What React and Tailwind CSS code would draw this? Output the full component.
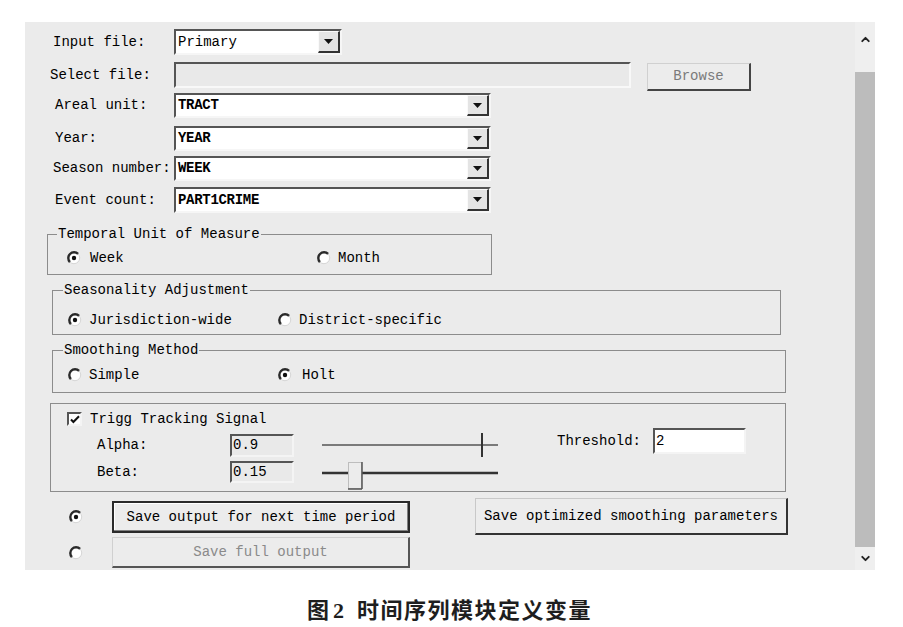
import { ChevronUp, ChevronDown } from "lucide-react";

function Radio({ checked }) {
  return (
    <svg width="14" height="14" viewBox="0 0 14 14" className="shrink-0">
      <circle cx="7" cy="7" r="5.8" fill="#fff" />
      <path d="M11.1 2.9A5.8 5.8 0 0 0 2.9 11.1" fill="none" stroke="#2a2a2a" strokeWidth="2.4" />
      <path d="M2.9 11.1A5.8 5.8 0 0 0 11.1 2.9" fill="none" stroke="#d6d6d6" strokeWidth="1" />
      {checked && <circle cx="7" cy="7" r="2.2" fill="#111" />}
    </svg>
  );
}

function Select({ value, w, h, bold }) {
  return (
    <div
      className={`flex ${w} ${h} border-2 border-t-[#555] border-l-[#555] border-r-[#f6f6f6] border-b-[#f6f6f6] bg-white`}
    >
      <span className={`flex flex-1 items-center pl-[2px] text-black ${bold ? "font-bold tracking-[-0.3px]" : ""}`}>
        {value}
      </span>
      <div className="flex w-[22px] items-center justify-center border border-t-[#fafafa] border-l-[#fafafa] border-r-2 border-b-2 border-r-[#333] border-b-[#333] bg-[#e4e4e4]">
        <svg width="9" height="5" viewBox="0 0 9 5">
          <path d="M0 0h9L4.5 5z" fill="#111" />
        </svg>
      </div>
    </div>
  );
}

function Row({ label, pad, children, className }) {
  return (
    <div className={`flex items-center ${className}`}>
      <span className={`w-[149px] ${pad}`}>{label}</span>
      {children}
    </div>
  );
}

export default function App() {
  return (
    <div className="flex h-[627px] w-[903px] flex-col bg-white font-['Liberation_Mono','DejaVu_Sans_Mono',monospace] text-[14px] text-black">
      <div className="ml-[25px] mt-[22px] flex h-[548px] w-[850px]">
        {/* form area */}
        <div className="flex h-full w-[830px] flex-col overflow-hidden bg-[#ebebeb]">
          <Row label="Input file:" pad="pl-[28px]" className="mt-[7px] h-[26px]">
            <Select value="Primary" w="w-[168px]" h="h-[26px]" />
          </Row>

          <div className="mt-[7px] flex h-[29px] items-start">
            <span className="w-[149px] pl-[25px] leading-[26px]">Select file:</span>
            <div className="h-[26px] w-[457px] border-2 border-t-[#555] border-l-[#555] border-r-[#f8f8f8] border-b-[#f8f8f8] bg-[#e9e9e9]" />
            <button className="ml-[16px] mt-[1px] h-[28px] w-[104px] border border-t-[#d0d0d0] border-l-[#d0d0d0] border-r-2 border-b-2 border-r-[#444] border-b-[#444] bg-[#ececec] text-[#7a7a7a]">
              Browse
            </button>
          </div>

          <Row label="Areal unit:" pad="pl-[30px]" className="mt-[2px] h-[25px]">
            <Select value="TRACT" w="w-[317px]" h="h-[25px]" bold />
          </Row>
          <Row label="Year:" pad="pl-[30px]" className="mt-[8px] h-[25px]">
            <Select value="YEAR" w="w-[317px]" h="h-[25px]" bold />
          </Row>
          <Row label="Season number:" pad="pl-[28px]" className="mt-[5px] h-[25px]">
            <Select value="WEEK" w="w-[317px]" h="h-[25px]" bold />
          </Row>
          <Row label="Event count:" pad="pl-[30px]" className="mt-[6px] h-[26px]">
            <Select value="PART1CRIME" w="w-[317px]" h="h-[26px]" bold />
          </Row>

          <fieldset className="ml-[22px] mt-[13px] w-[445px] border border-[#8c8c8c] pb-[7px]">
            <legend className="ml-[9px] px-[1px] leading-[16px]">Temporal Unit of Measure</legend>
            <div className="mt-[7px] flex h-[18px] items-center pl-[19px]">
              <div className="flex w-[250px] items-center gap-[9px]">
                <Radio checked />
                <span>Week</span>
              </div>
              <div className="flex items-center gap-[7px]">
                <Radio />
                <span>Month</span>
              </div>
            </div>
          </fieldset>

          <fieldset className="ml-[27px] mt-[7px] w-[729px] border border-[#8c8c8c] pb-[5px]">
            <legend className="ml-[10px] px-[1px] leading-[16px]">Seasonality Adjustment</legend>
            <div className="mt-[13px] flex h-[18px] items-center pl-[15px]">
              <div className="flex w-[210px] items-center gap-[7px]">
                <Radio checked />
                <span>Jurisdiction-wide</span>
              </div>
              <div className="flex items-center gap-[7px]">
                <Radio />
                <span>District-specific</span>
              </div>
            </div>
          </fieldset>

          <fieldset className="ml-[27px] mt-[7px] w-[734px] border border-[#8c8c8c] pb-[8px]">
            <legend className="ml-[10px] px-[1px] leading-[16px]">Smoothing Method</legend>
            <div className="mt-[8px] flex h-[18px] items-center pl-[15px]">
              <div className="flex w-[210px] items-center gap-[7px]">
                <Radio />
                <span>Simple</span>
              </div>
              <div className="flex items-center gap-[10px]">
                <Radio checked />
                <span>Holt</span>
              </div>
            </div>
          </fieldset>

          {/* Trigg tracking signal */}
          <div className="ml-[25px] mt-[10px] h-[89px] w-[736px] border border-[#8c8c8c] pt-[8px]">
            <div className="flex h-[14px] items-center pl-[16px]">
              <div className="flex h-[14px] w-[15px] items-center justify-center border-2 border-t-[#555] border-l-[#555] border-r-[#f4f4f4] border-b-[#f4f4f4] bg-white">
                <svg width="10" height="9" viewBox="0 0 10 9">
                  <path d="M1 4.5l2.4 2.5L9 1.2" fill="none" stroke="#111" strokeWidth="2" />
                </svg>
              </div>
              <span className="ml-[8px]">Trigg Tracking Signal</span>
            </div>

            <div className="mt-[2px] flex items-start">
              <div className="flex flex-col pt-[5px]">
                <div className="flex h-[24px] items-center">
                  <span className="w-[179px] pl-[46px]">Alpha:</span>
                  <div className="flex h-[23px] w-[64px] items-center border-2 border-t-[#555] border-l-[#555] border-r-[#f4f4f4] border-b-[#f4f4f4] bg-[#e9e9e9] pl-[1px]">
                    0.9
                  </div>
                  <svg width="176" height="24" viewBox="0 0 176 24" className="ml-[28px]">
                    <path d="M0 12H176" stroke="#555" strokeWidth="1.5" />
                    <path d="M160 0V24" stroke="#333" strokeWidth="2" />
                  </svg>
                </div>
                <div className="mt-[3px] flex h-[24px] items-center">
                  <span className="w-[179px] pl-[46px]">Beta:</span>
                  <div className="flex h-[22px] w-[64px] items-center border-2 border-t-[#555] border-l-[#555] border-r-[#f4f4f4] border-b-[#f4f4f4] bg-[#e9e9e9] pl-[1px]">
                    0.15
                  </div>
                  <svg width="176" height="24" viewBox="0 0 176 24" className="ml-[28px] overflow-visible">
                    <path d="M0 13H176" stroke="#333" strokeWidth="2.5" />
                    <rect x="26.5" y="2.5" width="13" height="26" fill="#ececec" stroke="#bdbdbd" />
                    <path d="M40 2V29M26 29H40" stroke="#555" strokeWidth="1.5" />
                  </svg>
                </div>
              </div>

              <div className="ml-[59px] flex h-[26px] items-center">
                <span>Threshold:</span>
                <div className="ml-[12px] flex h-[26px] w-[93px] items-center border-2 border-t-[#555] border-l-[#555] border-r-[#f4f4f4] border-b-[#f4f4f4] bg-white pl-[1px]">
                  2
                </div>
              </div>
            </div>
          </div>

          {/* output buttons */}
          <div className="mt-[9px] flex items-start">
            <div className="flex flex-col">
              <div className="flex h-[32px] items-center">
                <span className="ml-[44px]">
                  <Radio checked />
                </span>
                <button className="ml-[29px] h-[32px] w-[298px] border-2 border-[#2a2a2a] bg-[#ececec] shadow-[inset_-1px_-1px_0_#808080,inset_1px_1px_0_#ffffff]">
                  Save output for next time period
                </button>
              </div>
              <div className="mt-[4px] flex h-[31px] items-center">
                <span className="ml-[44px]">
                  <Radio />
                </span>
                <button className="ml-[29px] h-[31px] w-[298px] border border-t-[#d0d0d0] border-l-[#d0d0d0] border-r-2 border-b-2 border-r-[#555] border-b-[#555] bg-[#ececec] text-[#8a8a8a]">
                  Save full output
                </button>
              </div>
            </div>
            <button className="ml-[65px] mt-[-3px] h-[37px] w-[313px] border border-t-[#c8c8c8] border-l-[#c8c8c8] border-r-2 border-b-2 border-r-[#333] border-b-[#333] bg-[#ececec]">
              Save optimized smoothing parameters
            </button>
          </div>
        </div>

        {/* scrollbar */}
        <div className="flex h-full w-[20px] flex-col bg-[#efefef]">
          <div className="flex h-[50px] justify-center pt-[11px]">
            <ChevronUp size={13} strokeWidth={3.5} color="#222" />
          </div>
          <div className="flex-1 bg-[#bcbcbc]" />
          <div className="flex h-[23px] items-center justify-center">
            <ChevronDown size={13} strokeWidth={3.5} color="#222" />
          </div>
        </div>
      </div>

      <div className="mt-[24px] flex items-baseline justify-center pr-[4px] text-[22px] font-bold leading-[28px] text-[#1e1e1e]">
        <span className="font-['Noto_Sans_CJK_SC',sans-serif]">图</span>
        <span className="ml-[4px] font-['Liberation_Serif',serif]">2</span>
        <span className="ml-[13px] font-['Noto_Sans_CJK_SC',sans-serif] tracking-[1.5px]">时间序列模块定义变量</span>
      </div>
    </div>
  );
}
